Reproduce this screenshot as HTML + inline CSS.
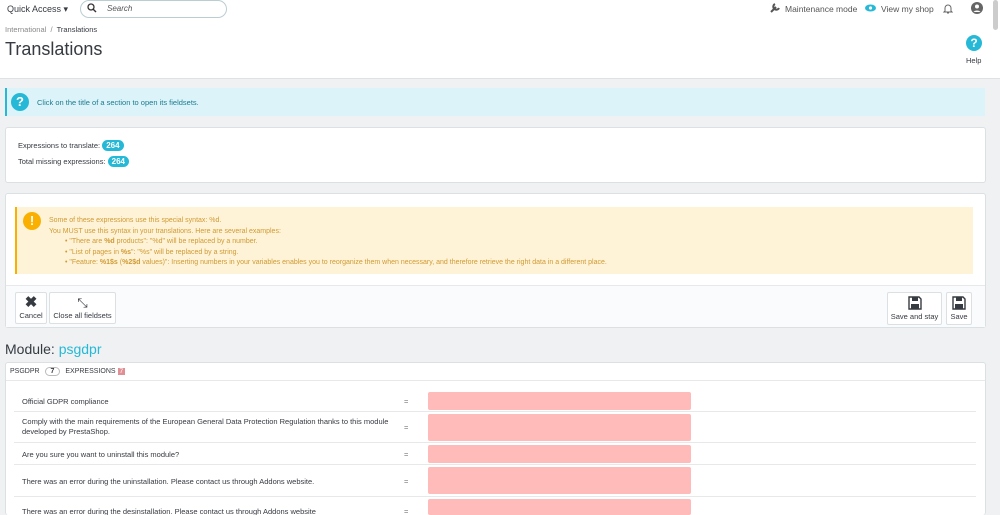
<!DOCTYPE html>
<html style="height:515px;overflow:hidden"><head><meta charset="utf-8"><style>
*{box-sizing:border-box;margin:0;padding:0}
body{width:1000px;height:515px;overflow:hidden;background:#eff1f2;font-family:"Liberation Sans",sans-serif;color:#363a41;position:relative}
.a{position:absolute}
.hdr{left:0;top:0;width:1000px;height:79px;background:#fff;border-bottom:1px solid #dfe2e4}
.card{background:#fff;border:1px solid #dbe0e3;border-radius:3px}
.badge{display:inline-block;background:#25b9d7;color:#fff;border-radius:8px;padding:1px 4px;font-size:8px;font-weight:bold}
.row{left:14px;width:962px;border-bottom:1px solid #e6e8ea;font-size:7.5px;color:#363a41}
.row span{position:absolute;left:8px}
.row i{position:absolute;left:390px;font-style:normal;color:#777}
.row b{position:absolute;left:414px;width:263px;background:#ffbaba;border-radius:2px}
.btn{background:#fff;border:1px solid #dbe0e3;border-radius:2px;font-size:7.5px;text-align:center;color:#363a41}
</style></head><body>
<div class="a hdr"></div>
<div class="a" style="left:7px;top:4px;font-size:9px">Quick Access ▾</div>
<div class="a" style="left:80px;top:0;width:147px;height:18px;border:1px solid #bbcdd2;border-radius:9px"></div>
<svg class="a" style="left:87px;top:3px" width="10" height="10" viewBox="0 0 10 10"><circle cx="4" cy="4" r="3" fill="none" stroke="#333" stroke-width="1.3"/><path d="M6.2 6.2L9 9" stroke="#333" stroke-width="1.4"/></svg>
<div class="a" style="left:107px;top:4px;font-size:8px;font-style:italic;color:#555">Search</div>
<div class="a" style="left:5px;top:25px;font-size:7.5px;color:#888">International &nbsp;/&nbsp; <span style="color:#363a41">Translations</span></div>
<div class="a" style="left:5px;top:39px;font-size:18px">Translations</div>
<svg class="a" style="left:769px;top:2px" width="12" height="12" viewBox="0 0 12 12"><path d="M2 10L7 5M6 2a3 3 0 1 0 4 4" stroke="#555" stroke-width="2" fill="none"/></svg>
<div class="a" style="left:785px;top:4px;font-size:8.5px;color:#555">Maintenance mode</div>
<svg class="a" style="left:865px;top:4px" width="11" height="8" viewBox="0 0 11 8"><ellipse cx="5.5" cy="4" rx="5.5" ry="3.5" fill="#25b9d7"/><circle cx="5.5" cy="4" r="1.6" fill="#fff"/></svg>
<div class="a" style="left:881px;top:4px;font-size:8.5px;color:#555">View my shop</div>
<svg class="a" style="left:943px;top:3px" width="10" height="11" viewBox="0 0 10 11"><path d="M2 8V5a3 3 0 0 1 6 0v3l1 1H1z M4 10h2" stroke="#666" fill="none"/></svg>
<svg class="a" style="left:971px;top:2px" width="12" height="12" viewBox="0 0 12 12"><circle cx="6" cy="6" r="6" fill="#666"/><circle cx="6" cy="4.5" r="2" fill="#fff"/><path d="M2.5 10a4 3 0 0 1 7 0" fill="#fff"/></svg>
<div class="a" style="left:966px;top:35px;width:16px;height:16px;border-radius:50%;background:#25b9d7;color:#fff;font-size:12px;font-weight:bold;text-align:center;line-height:16px">?</div>
<div class="a" style="left:966px;top:56px;font-size:7.5px">Help</div>
<div class="a" style="left:993px;top:0;width:5px;height:30px;background:#ccc;border-radius:3px"></div>

<div class="a" style="left:5px;top:88px;width:980px;height:28px;background:#dcf4f9;border-left:2px solid #25b9d7"></div>
<div class="a" style="left:11px;top:93px;width:18px;height:18px;border-radius:50%;background:#25b9d7;color:#fff;font-size:13px;font-weight:bold;text-align:center;line-height:18px">?</div>
<div class="a" style="left:37px;top:98px;font-size:7.5px;color:#1a7a8f">Click on the title of a section to open its fieldsets.</div>

<div class="a card" style="left:5px;top:127px;width:981px;height:56px"></div>
<div class="a" style="left:18px;top:140px;font-size:7.5px">Expressions to translate: <span class="badge">264</span></div>
<div class="a" style="left:18px;top:156px;font-size:7.5px">Total missing expressions: <span class="badge">264</span></div>

<div class="a card" style="left:5px;top:193px;width:981px;height:135px"></div>
<div class="a" style="left:15px;top:207px;width:958px;height:67px;background:#fff3d7;border-left:2px solid #fab000"></div>
<div class="a" style="left:23px;top:212px;width:18px;height:18px;border-radius:50%;background:#fab000;color:#fff;font-size:13px;font-weight:bold;text-align:center;line-height:18px">!</div>
<div class="a" style="left:49px;top:216px;font-size:7px;color:#cf9a33;line-height:10.5px">Some of these expressions use this special syntax: %d.<br>You MUST use this syntax in your translations. Here are several examples:<br>
<span style="padding-left:16px">• "There are <b>%d</b> products": "%d" will be replaced by a number.</span><br>
<span style="padding-left:16px">• "List of pages in <b>%s</b>": "%s" will be replaced by a string.</span><br>
<span style="padding-left:16px">• "Feature: <b>%1$s</b> (<b>%2$d</b> values)": Inserting numbers in your variables enables you to reorganize them when necessary, and therefore retrieve the right data in a different place.</span></div>
<div class="a" style="left:6px;top:285px;width:979px;height:42px;background:#fafbfc;border-top:1px solid #e6e8ea"></div>
<div class="a btn" style="left:15px;top:292px;width:32px;height:32px"><div style="font-size:15px;font-weight:bold;line-height:16px;margin-top:2px">✖</div>Cancel</div>
<div class="a btn" style="left:49px;top:292px;width:67px;height:32px"><div style="font-size:13px;line-height:16px;margin-top:2px">⤡</div>Close all fieldsets</div>
<div class="a btn" style="left:887px;top:292px;width:55px;height:33px"><svg width="14" height="14" viewBox="0 0 14 14" style="margin-top:3px"><path d="M1 1h10l2 2v10H1z" fill="none" stroke="#363a41" stroke-width="1.4"/><rect x="4" y="1" width="6" height="4" fill="#363a41"/><rect x="3" y="8" width="8" height="5" fill="#363a41"/></svg><br>Save and stay</div>
<div class="a btn" style="left:946px;top:292px;width:26px;height:33px"><svg width="14" height="14" viewBox="0 0 14 14" style="margin-top:3px"><path d="M1 1h10l2 2v10H1z" fill="none" stroke="#363a41" stroke-width="1.4"/><rect x="4" y="1" width="6" height="4" fill="#363a41"/><rect x="3" y="8" width="8" height="5" fill="#363a41"/></svg><br>Save</div>

<div class="a" style="left:5px;top:341px;font-size:14px">Module: <span style="color:#25b9d7">psgdpr</span></div>
<div class="a card" style="left:5px;top:362px;width:981px;height:153px;border-bottom:0"></div>
<div class="a" style="left:6px;top:363px;width:979px;height:18px;border-bottom:1px solid #e6e8ea"></div>
<div class="a" style="left:10px;top:367px;font-size:7px">PSGDPR <span style="display:inline-block;border:1px solid #bbb;border-radius:7px;padding:0 5px;margin:0 3px;font-weight:bold">7</span> EXPRESSIONS <span style="background:#e08f95;color:#fff;padding:0 2px;font-size:6.5px">7</span></div>
<div class="a row" style="top:389px;height:23px"><span style="top:8px">Official GDPR compliance</span><i style="top:8px">=</i><b style="top:3px;height:18px"></b></div>
<div class="a row" style="top:412px;height:31px"><span style="top:5px;line-height:10px">Comply with the main requirements of the European General Data Protection Regulation thanks to this module<br>developed by PrestaShop.</span><i style="top:11px">=</i><b style="top:2px;height:27px"></b></div>
<div class="a row" style="top:443px;height:22px"><span style="top:7px">Are you sure you want to uninstall this module?</span><i style="top:7px">=</i><b style="top:2px;height:18px"></b></div>
<div class="a row" style="top:465px;height:32px"><span style="top:12px">There was an error during the uninstallation. Please contact us through Addons website.</span><i style="top:12px">=</i><b style="top:2px;height:27px"></b></div>
<div class="a row" style="top:497px;height:18px;border:0"><span style="top:10px">There was an error during the desinstallation. Please contact us through Addons website</span><i style="top:10px">=</i><b style="top:2px;height:16px"></b></div>
</body></html>
